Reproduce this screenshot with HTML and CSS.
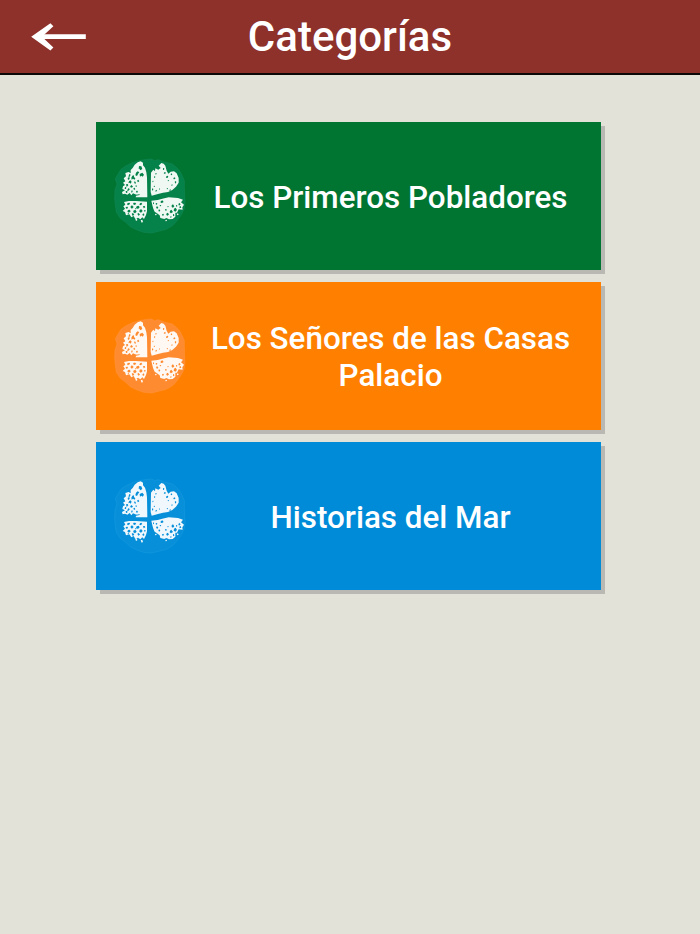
FILE: index.html
```html
<!DOCTYPE html>
<html lang="es">
<head>
<meta charset="utf-8">
<title>Categorías</title>
<link rel="stylesheet" href="styles.css">
</head>
<body>
<svg class="defs" aria-hidden="true">
  <symbol id="emblem" viewBox="0 0 270 270">
    <path class="disc" d="M102 32L120 29L140 27L148 32L160 29L178 36L202 42L212 50L224 62L232 78L238 92L238 112L239 140L240 156L238 176L228 196L216 212L204 226L184 238L164 243L140 249L116 247L96 240L76 230L62 217L46 205L34 187L31 166L29 144L30 120L36 102L31 86L38 74L48 58L62 48L82 38Z"/>
    <g class="leaf">
      <path d="M107 34L114 38L114 46L120 53L124 67L126 82L127 142L92 142L94 134L84 130L79 136L74 129L67 134L60 131L53 133L51 126L60 121L52 117L54 109L60 105L54 98L61 94L56 85L63 79L61 69L71 66L77 70L77 60L83 54L89 44L98 37Z"/>
      <path d="M138 68L145 59L150 64L151 55L160 59L167 54L161 47L169 39L176 41L181 47L185 62L190 71L197 65L207 64L215 70L221 84L221 98L213 110L202 120L189 126L174 128L159 132L140 137L137 126Z"/>
      <path d="M57 156L72 153L93 153L126 155L126 184L123 195L117 207L112 202L106 208L99 203L91 207L86 198L79 202L73 193L63 196L60 186L53 183L60 176L55 169L61 164Z"/>
      <path d="M107 211l5-2 2 7-4 2zM91 207l5-2 1 6-4 2z"/>
      <path d="M139 152L158 150L172 146L191 142L219 144L234 149L228 157L237 164L232 172L233 179L221 178L216 188L211 188L211 200L203 207L192 208L184 204L178 207L166 204L164 196L156 190L149 185L145 176L142 166Z"/>
      <path d="M215 192l4-2 2 4-4 2zM181 210l4-1 1 4-4 1zM150 192l4-1 1 4-4 1z"/>
    </g>
    <g class="speck">
      <path d="M102 48l7 1 3 8-6 4-3-5-2 0zM93 68l5-4 5 3-4 5-3 6-5-2zM104 72l8-4 5 6-4 6-4-3-4 3zM82 77l5-1 0 5 4 4-2 4-5-3-4 3-1-6zM68 84l5-4 1 7-5 3zM96 92l4-3 3 5-4 3zM72 94l4-3 4 4-3 6-3-3-4 2zM87 96l3-2 3 5-3 3zM63 103l5-1 2 4-5 5zM77 107l3-2 4 5-4 3-3-2-3 2zM69 116l3-2 2 5-4 3-4 0zM85 115l4-2 2 5-4 2zM93 123l4-1 2 4-4 3zM79 122l3-1 1 5-4 2zM60 111l4 1-1 5-4 0zM62 123l5 0 0 5-4 1zM91 107l3-1 2 3-3 2zM73 72l4 2-3 6-4 0zM92 134l12-1 0 2-11 2z"/>
      <path d="M151 70l3-1 1 3-3 2zM147 80l3-2 1 4-4 2zM174 54l4 1-1 5-3-1zM179 66l4 2-3 4-4-2zM184 79l4-2 2 3-3 4-4-1zM197 72l3-2 2 4-4 2zM205 84l5-2 1 5-5 1zM188 91l3-1 1 2-3 2zM209 95l4-2 1 4-3 4zM199 104l3-1 1 3-3 2zM142 93l3-1 0 4-2 1zM141 116l3-1 1 4-4 3zM151 122l4-3 1 4-4 2zM146 108l3-1 1 3-3 1zM162 116l2-1 1 3-3 1zM185 115l3-1 1 3-3 1zM193 120l4-2 1 3-4 2z"/>
      <path d="M68 159l6-1 1 4-6 4-3-3zM86 158l5 0 3 4-6 3-4-3zM105 160l4-2 3 4-5 4-4-2zM77 169l4-3 5 5-5 5-4-3zM95 169l6-2 3 5-5 5-6-4zM114 168l5 0 2 4-5 3zM62 171l6-1 1 5-6 1zM69 180l5-1 3 5-5 4-5-3zM85 182l6-3 4 6-5 5-5-3zM104 179l5-1 4 5-5 5-5-3zM80 191l4-2 4 5-5 4zM97 191l4-2 4 5-5 3zM112 193l5-3 1 6-4 2zM117 181l4-1 1 4-4 1zM91 174l3 0 0 3-3 1zM68 190l3-1 1 3-3 1z"/>
      <path d="M144 158l3-1 0 4-3 2zM152 160l4-1 1 3-4 3zM167 154l5-3 4 5-5 3-4-1zM153 171l4-2 3 4-4 4zM164 165l3 0 2 3-4 1zM160 180l3-2 3 4-4 3zM200 166l4-3 4 6-4 4-4-2zM207 176l5-3 4 7-5 5-5-3zM220 162l3-3 4 4-5 4zM195 182l4-3 5 7-6 4-4-3zM180 178l3-1 3 3-4 3zM184 191l4-3 4 5-4 4-4-2zM171 193l4-2 2 4-4 3zM204 193l3-1 1 5-4 2zM223 170l4-2 2 5-5 2zM213 166l3-1 1 4-4 1zM187 169l3-1 1 3-3 1zM195 200l4-1 1 3-4 1z"/>
    </g>
  </symbol>
</svg>
<header class="topbar">
  <a class="back" href="#" aria-label="Volver">
    <svg width="56" height="30" viewBox="0 0 56 30"><path d="M54.8 14.7H7" fill="none" stroke="#fff" stroke-width="4.8"/><path d="M0.2 14.7L19.4 1.2L22.4 4.2L11 14.7L22.4 25.4L19.4 28.4Z" fill="#fff"/></svg>
  </a>
  <h1 class="title">Categorías</h1>
</header>
<main class="categories">
  <a class="card green" href="#"><svg class="emblem"><use href="#emblem"/></svg><span class="label">Los Primeros Pobladores</span></a>
  <a class="card orange" href="#"><svg class="emblem"><use href="#emblem"/></svg><span class="label">Los Señores de las Casas Palacio</span></a>
  <a class="card blue" href="#"><svg class="emblem"><use href="#emblem"/></svg><span class="label">Historias del Mar</span></a>
</main>
</body>
</html>
```
FILE: styles.css
```css
* { box-sizing: border-box; }
body {
  margin: 0;
  min-height: 934px;
  background: #e2e2d9;
  font-family: Roboto, "Liberation Sans", sans-serif;
  font-weight: 500;
  color: #fff;
}
.defs { display: block; width: 0; height: 0; }
.topbar {
  display: grid;
  grid-template-columns: 118px 1fr 118px;
  align-items: center;
  height: 75px;
  background: #8e312b;
  border-bottom: 2px solid #0c0808;
}
.back { display: block; height: 30px; padding-left: 31px; }
.back svg { display: block; }
.title {
  margin: 0;
  font-size: 42px;
  line-height: 50px;
  font-weight: 500;
  text-align: center;
}
.categories {
  display: flex;
  flex-direction: column;
  gap: 12.5px;
  width: 505.5px;
  margin: 47px 0 0 95.5px;
}
.card {
  display: flex;
  align-items: center;
  height: 147.5px;
  padding: 0 25px 0 9.5px;
  color: #fff;
  text-decoration: none;
  box-shadow: 4px 4px 0 #b9b8b3;
}
.emblem { flex: none; width: 90px; height: 90px; margin-bottom: 1.5px; }
.disc { fill: var(--disc); stroke: var(--edge); stroke-width: 1.5; }
.leaf { fill: #fff; fill-opacity: .94; }
.speck { fill: var(--disc); }
.label {
  flex: 1;
  margin-left: 10px;
  padding-top: 3px;
  font-size: 31.4px;
  line-height: 37px;
  text-align: center;
}
.green { background: #007431; --disc: #05814a; --edge: #168b59; }
.orange { background: #ff8000; --disc: #ff8b31; --edge: #ff9540; }
.blue { background: #008bd8; --disc: #088fd9; --edge: #1b9cdf; }
```
